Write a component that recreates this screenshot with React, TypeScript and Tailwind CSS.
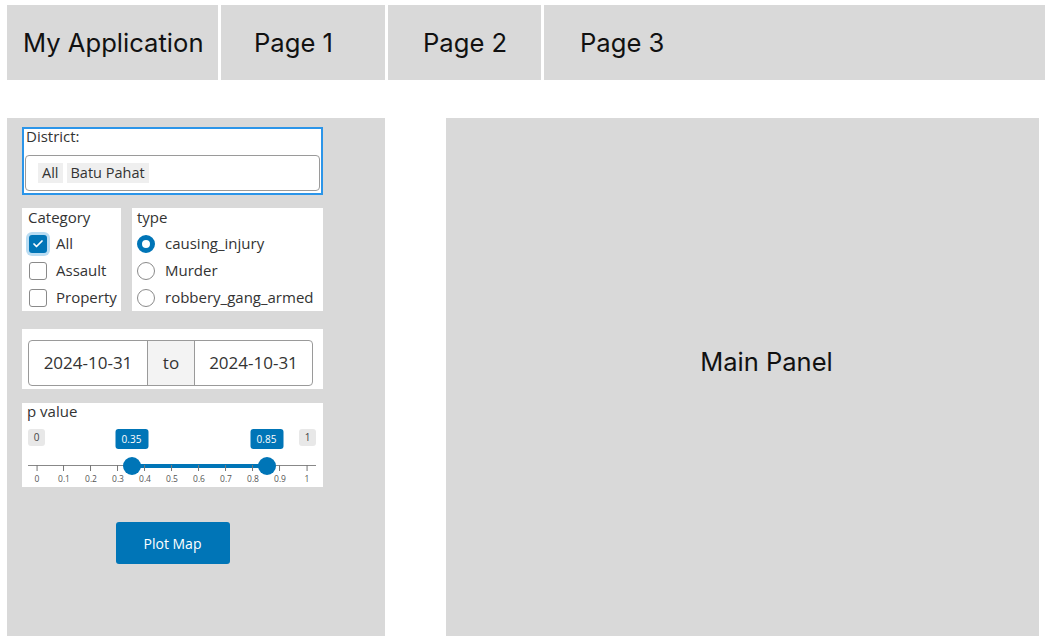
import { Check } from "lucide-react";

const NAV = [
  { label: "My Application", cls: "w-[211px] pl-[16px]" },
  { label: "Page 1", cls: "w-[164px] pl-[33px]" },
  { label: "Page 2", cls: "w-[153px] pl-[35px]" },
  { label: "Page 3", cls: "flex-1 pl-[36px]" },
];

const TICKS = [0, 0.1, 0.2, 0.3, 0.4, 0.5, 0.6, 0.7, 0.8, 0.9, 1];

// slider geometry (px inside the slider box)
const X0 = 10;
const SPAN = 270;
const pos = (v: number) => X0 + v * SPAN;

function CheckItem({ label, checked = false }: { label: string; checked?: boolean }) {
  return (
    <div className="flex items-center h-[27px]">
      {checked ? (
        <span className="w-[18px] h-[18px] rounded-[3px] bg-[#0075b7] flex items-center justify-center ring-[3px] ring-[#b9dcf2]">
          <Check size={12} strokeWidth={3.5} className="text-white" />
        </span>
      ) : (
        <span className="w-[18px] h-[18px] rounded-[3px] border border-[#8a8a8a] bg-white" />
      )}
      <span className="ml-[9px]">{label}</span>
    </div>
  );
}

function RadioItem({ label, checked = false }: { label: string; checked?: boolean }) {
  return (
    <div className="flex items-center h-[27px]">
      {checked ? (
        <span className="w-[18px] h-[18px] rounded-full border-[5px] border-[#0075b7] bg-white" />
      ) : (
        <span className="w-[18px] h-[18px] rounded-full border border-[#8a8a8a] bg-white" />
      )}
      <span className="ml-[10px]">{label}</span>
    </div>
  );
}

function Slider() {
  const lo = 0.35;
  const hi = 0.85;
  return (
    <div className="relative h-[62px]">
      {/* min / max */}
      <span className="absolute left-[1px] top-[8px] h-[17px] w-[17px] rounded-[3px] bg-[#e8e8e8] text-[10px] leading-[17px] text-center text-[#444]">0</span>
      <span className="absolute left-[272px] top-[8px] h-[17px] w-[17px] rounded-[3px] bg-[#e8e8e8] text-[10px] leading-[17px] text-center text-[#444]">1</span>
      {/* bubbles */}
      {[lo, hi].map((v) => (
        <span
          key={v}
          className="absolute top-[8px] h-[20px] w-[33px] -translate-x-1/2 rounded-[3px] bg-[#0075b7] text-white text-[10px] leading-[20px] text-center"
          style={{ left: pos(v) }}
        >
          {v.toFixed(2)}
        </span>
      ))}
      {/* base line */}
      <div className="absolute left-[1px] w-[288px] top-[44px] h-[1px] bg-[#888]" />
      {/* active bar */}
      <div
        className="absolute top-[43px] h-[4px] bg-[#0075b7]"
        style={{ left: pos(lo), width: pos(hi) - pos(lo) }}
      />
      {/* ticks */}
      {TICKS.map((t) => (
        <div key={t} className="absolute top-[44px] -translate-x-1/2 flex flex-col items-center" style={{ left: pos(t) }}>
          <div className="w-[1px] h-[6px] bg-[#777]" />
          <span className="text-[8.5px] leading-[16px] text-[#555]">{t}</span>
        </div>
      ))}
      {/* handles */}
      {[lo, hi].map((v) => (
        <span
          key={v}
          className="absolute top-[36px] h-[18px] w-[18px] -translate-x-1/2 rounded-full bg-[#0075b7]"
          style={{ left: pos(v) }}
        />
      ))}
    </div>
  );
}

export default function App() {
  return (
    <div className="w-[1045px] h-[642px] bg-white flex flex-col overflow-hidden">
      {/* Navbar */}
      <nav className="mt-[5px] ml-[7px] h-[75px] flex gap-[3px] font-['Inter',sans-serif] text-[25.6px] text-[#111]">
        {NAV.map((n) => (
          <div key={n.label} className={`bg-[#d9d9d9] flex items-center pt-[2px] ${n.cls}`}>
            {n.label}
          </div>
        ))}
      </nav>

      <div className="mt-[38px] ml-[7px] flex h-[518px]">
        {/* Sidebar */}
        <aside className="w-[378px] bg-[#d9d9d9] pl-[15px] pt-[9px] font-['Open_Sans',sans-serif] text-[15px] text-[#333]">
          <div className="w-[301px] flex flex-col">
            {/* District */}
            <div className="h-[68px] border-2 border-[#2b95e9] bg-white px-[1px]">
              <div className="pl-[1px] leading-[20px] mt-[-3px]">District:</div>
              <div className="mt-[9px] h-[36px] rounded-[4px] border border-[#9a9a9a] flex items-center gap-[4px] pl-[12px] text-[14.5px]">
                <span className="bg-[#efefef] px-[4px] leading-[20px]">All</span>
                <span className="bg-[#efefef] px-[4px] leading-[20px]">Batu Pahat</span>
              </div>
            </div>

            {/* Category + type */}
            <div className="mt-[13px] flex gap-[11px]">
              <div className="w-[99px] h-[103px] bg-white pl-[7px]">
                <div className="leading-[20px] ml-[-1px] mt-[-1px]">Category</div>
                <div className="mt-[3px]">
                  <CheckItem label="All" checked />
                  <CheckItem label="Assault" />
                  <CheckItem label="Property" />
                </div>
              </div>
              <div className="w-[191px] h-[103px] bg-white pl-[5px]">
                <div className="leading-[20px] mt-[-1px]">type</div>
                <div className="mt-[3px]">
                  <RadioItem label="causing_injury" checked />
                  <RadioItem label="Murder" />
                  <RadioItem label="robbery_gang_armed" />
                </div>
              </div>
            </div>

            {/* Date range */}
            <div className="mt-[18px] h-[60px] bg-white pl-[6px] pr-[10px] pt-[11px]">
              <div className="h-[46px] flex rounded-[4px] border border-[#9a9a9a] text-[17px] text-[#333]">
                <div className="w-[118px] flex items-center justify-center">2024-10-31</div>
                <div className="w-[48px] flex items-center justify-center bg-[#f3f3f3] border-x border-[#9a9a9a]">to</div>
                <div className="flex-1 flex items-center justify-center">2024-10-31</div>
              </div>
            </div>

            {/* p value */}
            <div className="mt-[14px] h-[84px] bg-white pl-[5px]">
              <div className="leading-[20px] mt-[-2px]">p value</div>
              <Slider />
            </div>

            {/* Button */}
            <div className="mt-[35px] flex justify-center">
              <button className="w-[114px] h-[42px] rounded-[3px] bg-[#0075b7] text-white text-[14px]">
                Plot Map
              </button>
            </div>
          </div>
        </aside>

        {/* Main panel */}
        <main className="ml-[61px] w-[593px] bg-[#d9d9d9] flex items-center justify-center pl-[48px] font-['Inter',sans-serif] text-[25.5px] text-[#111]">
          <span className="mb-[30px]">Main Panel</span>
        </main>
      </div>
    </div>
  );
}
